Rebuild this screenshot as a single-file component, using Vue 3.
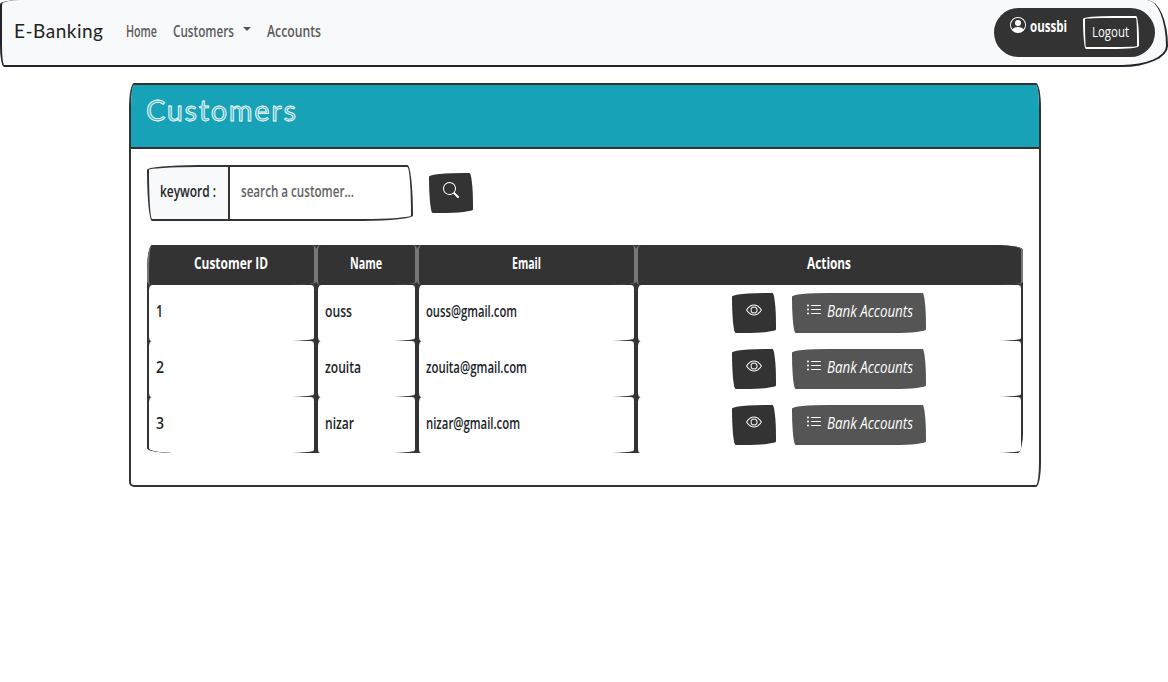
<script setup>
import { h } from 'vue'

// Condensed hand-lettered label: real text fitted to a given width.
const Ink = (props) =>
  h('svg', { class: 'ink', width: props.w, height: props.box || 24 }, [
    h('text', {
      x: 0,
      y: props.base || 17.5,
      textLength: props.w,
      lengthAdjust: props.loose ? 'spacing' : 'spacingAndGlyphs'
    }, props.t)
  ])
Ink.props = { t: String, w: Number, box: Number, base: Number, loose: Boolean }

const columns = [
  { label: 'Customer ID', w: 74 },
  { label: 'Name', w: 32 },
  { label: 'Email', w: 29 },
  { label: 'Actions', w: 44 }
]
const customers = [
  { id: '1', idW: 7, name: 'ouss', nameW: 27, email: 'ouss@gmail.com', emailW: 91 },
  { id: '2', idW: 8, name: 'zouita', nameW: 36, email: 'zouita@gmail.com', emailW: 101 },
  { id: '3', idW: 8, name: 'nizar', nameW: 29, email: 'nizar@gmail.com', emailW: 94 }
]
</script>

<template>
  <div class="page">
    <nav class="navbar">
      <a class="brand"><Ink t="E-Banking" :w="89" :box="28" :base="20" loose /></a>
      <a class="link"><Ink t="Home" :w="31" /></a>
      <a class="link customers"><Ink t="Customers" :w="61" /><i class="caret"></i></a>
      <a class="link"><Ink t="Accounts" :w="54" /></a>
      <div class="user">
        <svg class="icon" width="16" height="16" viewBox="0 0 16 16" fill="currentColor">
          <path d="M11 6a3 3 0 1 1-6 0 3 3 0 0 1 6 0z" />
          <path fill-rule="evenodd" d="M0 8a8 8 0 1 1 16 0A8 8 0 0 1 0 8zm8-7a7 7 0 0 0-5.468 11.37C3.242 11.226 4.805 10 8 10s4.757 1.225 5.468 2.37A7 7 0 0 0 8 1z" />
        </svg>
        <Ink class="username" t="oussbi" :w="37" />
        <button class="logout"><Ink t="Logout" :w="37" /></button>
      </div>
    </nav>

    <main class="card">
      <header class="card-header"><Ink t="Customers" :w="150" :box="40" :base="29" loose /></header>
      <div class="card-body">
        <div class="search">
          <label class="prefix"><Ink t="keyword :" :w="56" /></label>
          <div class="field"><Ink t="search a customer..." :w="113" /></div>
          <button class="btn">
            <svg width="16" height="16" viewBox="0 0 16 16" fill="currentColor">
              <path d="M11.742 10.344a6.5 6.5 0 1 0-1.397 1.398h-.001c.03.04.062.078.098.115l3.85 3.85a1 1 0 0 0 1.415-1.414l-3.85-3.85a1.007 1.007 0 0 0-.115-.1zM12 6.5a5.5 5.5 0 1 1-11 0 5.5 5.5 0 0 1 11 0z" />
            </svg>
          </button>
        </div>

        <div class="table-frame">
          <table>
            <colgroup><col class="c1"><col class="c2"><col class="c3"><col class="c4"></colgroup>
            <thead>
              <tr><th v-for="c in columns" :key="c.label"><Ink :t="c.label" :w="c.w" /></th></tr>
            </thead>
            <tbody>
              <tr v-for="c in customers" :key="c.id">
                <td><Ink :t="c.id" :w="c.idW" /></td>
                <td><Ink :t="c.name" :w="c.nameW" /></td>
                <td><Ink :t="c.email" :w="c.emailW" /></td>
                <td>
                  <div class="actions">
                    <button class="btn">
                      <svg width="16" height="16" viewBox="0 0 16 16" fill="currentColor">
                        <path d="M16 8s-3-5.500-8-5.500S0 8 0 8s3 5.500 8 5.500S16 8 16 8zM1.173 8a13.133 13.133 0 0 1 1.660-2.043C4.120 4.668 5.880 3.500 8 3.500c2.120 0 3.879 1.168 5.168 2.457A13.133 13.133 0 0 1 14.828 8c-.058.087-.122.183-.195.288-.335.480-.830 1.120-1.465 1.755C11.879 11.332 10.119 12.500 8 12.500c-2.120 0-3.879-1.168-5.168-2.457A13.134 13.134 0 0 1 1.172 8z" />
                        <path d="M8 5.500a2.500 2.500 0 1 0 0 5 2.500 2.500 0 0 0 0-5zM4.500 8a3.500 3.500 0 1 1 7 0 3.500 3.500 0 0 1-7 0z" />
                      </svg>
                    </button>
                    <button class="btn secondary">
                      <svg width="16" height="16" viewBox="0 0 16 16" fill="currentColor">
                        <path fill-rule="evenodd" d="M5 11.500a.5.5 0 0 1 .5-.5h9a.5.5 0 0 1 0 1h-9a.5.5 0 0 1-.5-.5zm0-4a.5.5 0 0 1 .5-.5h9a.5.5 0 0 1 0 1h-9a.5.5 0 0 1-.5-.5zm0-4a.5.5 0 0 1 .5-.5h9a.5.5 0 0 1 0 1h-9a.5.5 0 0 1-.5-.5zm-3 1a1 1 0 1 0 0-2 1 1 0 0 0 0 2zm0 4a1 1 0 1 0 0-2 1 1 0 0 0 0 2zm0 4a1 1 0 1 0 0-2 1 1 0 0 0 0 2z" />
                      </svg>
                      <Ink t="Bank Accounts" :w="86" />
                    </button>
                  </div>
                </td>
              </tr>
            </tbody>
          </table>
        </div>
      </div>
    </main>
  </div>
</template>

<style>
html, body { background: #fff; }
</style>

<style scoped>
* { box-sizing: border-box; }
.page { font: 600 16px/24px "Open Sans", "Noto Sans", sans-serif; color: #212529; }
.ink { display: block; flex: none; overflow: visible; fill: currentColor; }

.navbar {
  display: flex; align-items: flex-start; height: 67px; padding: 19px 11px 0 12px;
  background: #f8f9fb; border: 2px solid #212529; border-top-width: 0;
  border-radius: 25px 25px 55px 5px / 5px 55px 25px 25px;
}
.brand { color: #222; font: 400 19px/28px Lato, "Open Sans", sans-serif; margin: -1px 23px 0 0; }
.link { display: flex; color: #5c5c5c; margin-right: 16px; }
.caret { margin: 8px 0 0 9px; border: 4px solid transparent; border-top-color: #555; border-bottom: 0; height: 4px; }
.user {
  display: flex; align-items: flex-start; width: 161px; height: 49px; margin: -11px 0 0 auto;
  padding: 8px 16px; border-radius: 50px; background: #333; color: #fff;
}
.icon { margin-top: 1px; flex: none; }
.username { margin: -2px 0 0 4px; font-weight: 700; }
.logout {
  display: flex; width: 56px; height: 33px; margin-left: auto; padding: 0 0 0 7px; background: transparent;
  border: 2px solid #fff; color: #fff; font: 400 14px/21px "Open Sans", sans-serif;
  border-radius: 255px 25px 225px 25px / 25px 225px 25px 255px;
}
.logout .ink { margin-top: 1px; }

.card {
  width: 912px; height: 404px; margin: 16px auto 0 129px; border: 2px solid #333; background: #fff;
  border-radius: 5px 5px 5px 5px / 25px 25px 25px 5px; overflow: hidden;
}
.card-header {
  height: 64px; padding: 7px 15px; background: #17a2b8; border-bottom: 2px solid #333;
  font: 400 29px/34px Lato, "Open Sans", sans-serif;
}
.card-header .ink { stroke: #fff; stroke-width: .8px; fill: rgba(255, 255, 255, .3); }
.card-body { padding: 16px; }
.search { display: flex; align-items: center; height: 56px; }
.prefix, .field { height: 56px; padding: 12px 11px; border: 2px solid #333; }
.prefix { width: 83px; background: #f8f9fb; border-radius: 255px 0 0 25px / 25px 0 0 255px; }
.field { width: 185px; margin-left: -2px; color: #636363; border-radius: 0 25px 225px 0 / 0 225px 25px 0; }
.btn {
  display: flex; flex: none; width: 44px; height: 40px; padding: 9px 0 0 14px; border: 0;
  background: #333; color: #fff; font: 400 16px/24px "Open Sans", sans-serif;
  border-radius: 255px 25px 225px 25px / 25px 225px 25px 255px;
}
.search .btn { margin-left: 16px; }

.table-frame { margin-top: 24px; overflow: hidden; border-radius: 5px 25px 5px 25px / 25px 5px 25px 5px; }
table { width: 876px; table-layout: fixed; border-collapse: separate; border-spacing: 0; background: #333; }
.c1 { width: 169px; } .c2 { width: 101px; } .c3 { width: 219px; } .c4 { width: 387px; }
th, td { border: 0 solid #333; border-width: 0 2px; border-radius: 5px 5px 25px 4px / 5px 4px 3px 5px; }
th { height: 40px; padding: 6px 7px 10px 6px; background: #333; border-color: #777; color: #fff; vertical-align: top; }
th .ink { margin: 0 auto; }
th:first-child { border-top-left-radius: 5px 25px; }
th:last-child { border-top-right-radius: 25px 5px; }
td { height: 56px; padding: 14px 7px 0; background: #fff; vertical-align: top; }
td:last-child { padding: 8px 2px 0 0; }
tbody tr:last-child td:first-child { border-bottom-left-radius: 25px 5px; }
.actions { display: flex; justify-content: center; gap: 16px; }
.btn.secondary { width: 134px; padding: 6px 0 0 14px; background: #555; font-style: italic; }
.secondary svg:first-child { margin: 3px 5px 0 0; }
</style>
